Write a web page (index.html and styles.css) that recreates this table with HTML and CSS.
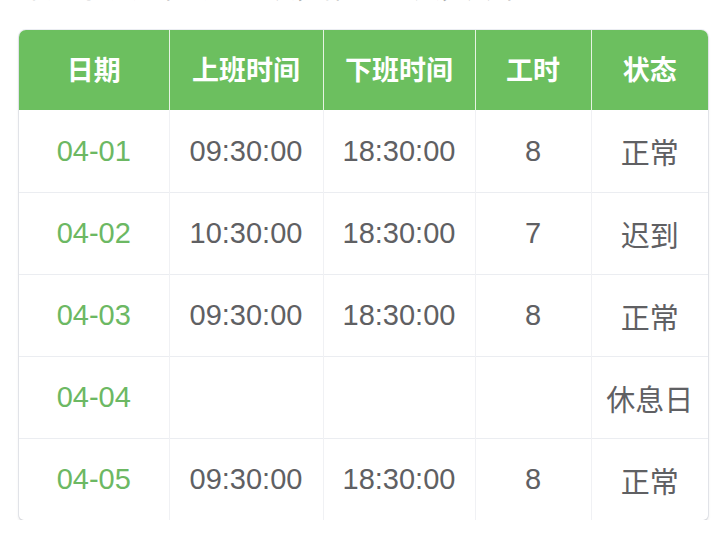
FILE: index.html
```html
<!DOCTYPE html>
<html lang="zh">
<head>
<meta charset="utf-8">
<link rel="stylesheet" href="styles.css">
</head>
<body>
<div class="page">
  <p class="summary">本月考勤统计：迟到1次，休息日1天，共计31小时</p>
  <div class="card">
    <table class="att">
      <colgroup>
        <col class="c1"><col class="c2"><col class="c3"><col class="c4"><col class="c5">
      </colgroup>
      <thead>
        <tr><th>日期</th><th>上班时间</th><th>下班时间</th><th>工时</th><th>状态</th></tr>
      </thead>
      <tbody>
        <tr><td class="date">04-01</td><td>09:30:00</td><td>18:30:00</td><td>8</td><td>正常</td></tr>
        <tr><td class="date">04-02</td><td>10:30:00</td><td>18:30:00</td><td>7</td><td>迟到</td></tr>
        <tr><td class="date">04-03</td><td>09:30:00</td><td>18:30:00</td><td>8</td><td>正常</td></tr>
        <tr><td class="date">04-04</td><td></td><td></td><td></td><td>休息日</td></tr>
        <tr><td class="date">04-05</td><td>09:30:00</td><td>18:30:00</td><td>8</td><td>正常</td></tr>
      </tbody>
    </table>
  </div>
</div>
</body>
</html>
```
FILE: styles.css
```css
html, body {
  margin: 0;
  background: #ffffff;
}
.page {
  padding: 0 18px 0 19px;
  font-family: "Liberation Sans", "Noto Sans CJK SC", sans-serif;
}
.summary {
  margin: -27px 0 0 2px;
  height: 57px;
  font-size: 26px;
  line-height: 32px;
  color: #a8a8a8;
  white-space: nowrap;
  overflow: hidden;
}
.card {
  width: 689px;
  border-radius: 7px 7px 5px 5px;
  overflow: hidden;
  box-shadow: 0 2px 3px rgba(0, 0, 0, 0.13), 0 0 0 1px #eceef3;
}
.att {
  width: 689px;
  border-collapse: collapse;
  table-layout: fixed;
}
.c1 { width: 150px; }
.c2 { width: 154px; }
.c3 { width: 152px; }
.c4 { width: 116px; }
.c5 { width: 117px; }
.att th {
  height: 77px;
  padding: 0 0 3px;
  background: #6cbf5f;
  color: #ffffff;
  font-size: 27px;
  font-weight: bold;
  text-align: center;
  border-left: 1px solid #e6f3e2;
}
.att th:first-child { border-left: none; }
.att td {
  height: 81px;
  padding: 0;
  font-size: 29px;
  color: #5f6063;
  text-align: center;
  border-top: 1px solid #ebedf1;
  border-left: 1px solid #f0f1f4;
}
.att td:first-child { border-left: none; }
.att tbody tr:first-child td { border-top: none; height: 82px; }
.att td.date { color: #6cb863; }
```
